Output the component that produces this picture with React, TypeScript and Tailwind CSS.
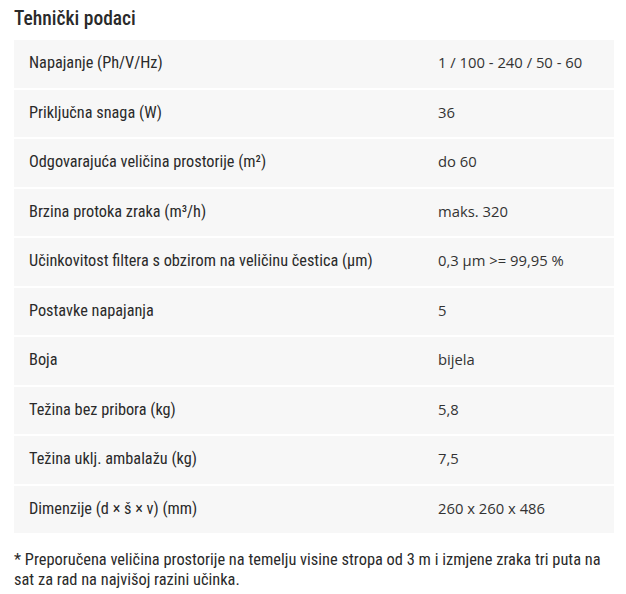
const SPECS: [string, string][] = [
  ['Napajanje (Ph/V/Hz)', '1 / 100 - 240 / 50 - 60'],
  ['Priključna snaga (W)', '36'],
  ['Odgovarajuća veličina prostorije (m²)', 'do 60'],
  ['Brzina protoka zraka (m³/h)', 'maks. 320'],
  ['Učinkovitost filtera s obzirom na veličinu čestica (µm)', '0,3 µm >= 99,95 %'],
  ['Postavke napajanja', '5'],
  ['Boja', 'bijela'],
  ['Težina bez pribora (kg)', '5,8'],
  ['Težina uklj. ambalažu (kg)', '7,5'],
  ['Dimenzije (d × š × v) (mm)', '260 x 260 x 486'],
]

function SpecRow({ label, value, first }: { label: string; value: string; first: boolean }) {
  return (
    <div className={first ? 'grid h-[47.5px] grid-cols-[424px_1fr] items-center' : 'grid h-[49.5px] grid-cols-[424px_1fr] items-center border-t-2 border-white'}>
      <div className="pb-[1px] pl-[15px] font-['Roboto_Condensed',sans-serif] text-[16.3px] text-[#2a2a2a]">{label}</div>
      <div className="pb-[3px] font-['Open_Sans',sans-serif] text-[14.8px] text-[#333]">{value}</div>
    </div>
  )
}

export default function App() {
  return (
    <div className="min-h-[594px] bg-white px-[14px] pt-[6px]">
      <h2 className="h-[34px] font-['Roboto_Condensed',sans-serif] text-[19.5px] font-medium leading-[26px] text-[#2a2a2a]">
        Tehnički podaci
      </h2>
      <div className="w-[600px] bg-[#f7f7f7]">
        {SPECS.map(([label, value], i) => (
          <SpecRow key={label} label={label} value={value} first={i === 0} />
        ))}
      </div>
      <p className="mt-[17px] w-[600px] font-['Roboto_Condensed',sans-serif] text-[16.4px] leading-[20px] text-[#2a2a2a]">
        * Preporučena veličina prostorije na temelju visine stropa od 3 m i izmjene zraka tri puta na sat za rad na
        najvišoj razini učinka.
      </p>
    </div>
  )
}
